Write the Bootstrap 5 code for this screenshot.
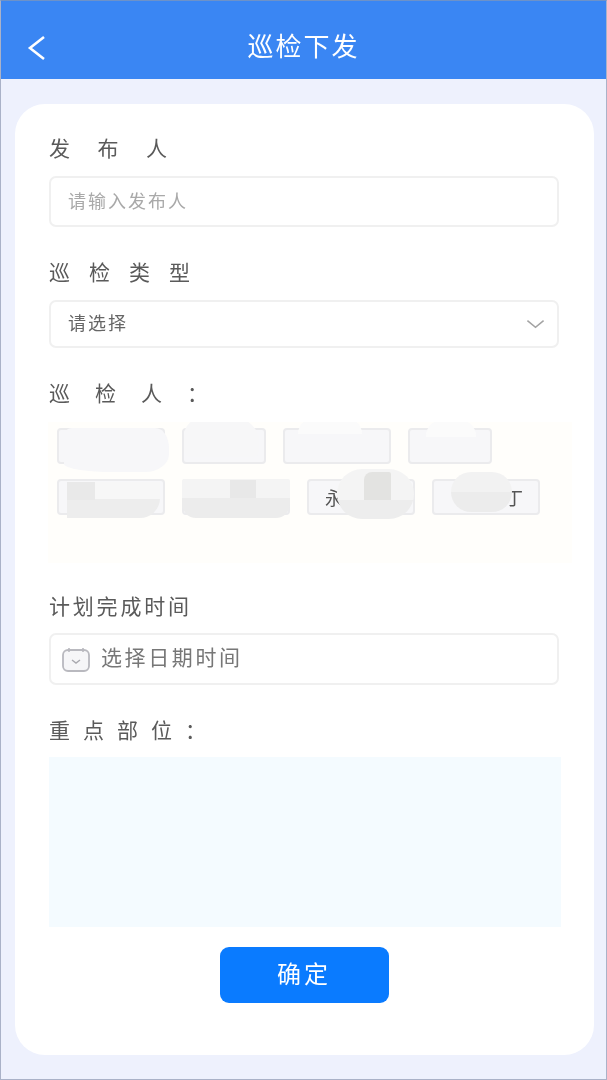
<!DOCTYPE html>
<html lang="zh-CN">
<head>
<meta charset="utf-8">
<title>巡检下发</title>
<link href="https://cdn.jsdelivr.net/npm/bootstrap@5.3.0/dist/css/bootstrap.min.css" rel="stylesheet">
<style>
html,body{height:100%;}
body{background:#eef1fd;font-family:"Noto Sans CJK SC","Liberation Sans",sans-serif;overflow:hidden;}
.shell{height:1080px;width:607px;border:1px solid #aab2c8;border-top-color:#6d92c8;filter:blur(.45px);}
.topbar{height:78px;background:#3a86f3;color:#fff;margin:0;}
.topbar svg{position:absolute;left:26px;top:34px;}
.topbar-title{font-size:26px;letter-spacing:2px;line-height:1;padding-top:9px;}
.sheet{margin:25px 12px 0 14px;height:951px;background:#fff;border-radius:30px;padding:30px 35px 52px 34px;}
.fld{font-size:21px;line-height:26px;padding-bottom:3px;color:#5a5a5a;margin:0;font-weight:400;display:block;}
.ls-a{letter-spacing:27.5px;}
.ls-b{letter-spacing:19px;}
.ls-c{letter-spacing:25px;}
.ls-d{letter-spacing:2.8px;}
.ls-e{letter-spacing:13px;}
.gap-a{margin-top:31px;}
.gap-b{margin-top:29px;}
.ctl.form-control,.ctl.form-select{height:51px;margin-top:13px;border:2px solid #f0f0f0;border-radius:7px;padding:0 17px 4px;font-size:18px;letter-spacing:2px;color:#666;box-shadow:none;}
.ctl.form-control::placeholder{color:#a9a9a9;opacity:1;}
.ctl.form-select{height:48px;background-image:url("data:image/svg+xml,%3Csvg xmlns='http://www.w3.org/2000/svg' viewBox='0 0 20 10'%3E%3Cpath d='M1.5 1.5 10 8.5l8.5-7' fill='none' stroke='%23a3a3a3' stroke-width='1.6'/%3E%3C/svg%3E");background-position:right 12px center;background-size:19px 10px;}
.people{margin:14px -13px 0 -1px;height:141px;background:#fffefb;position:relative;padding:6px 20px 0 9px;overflow:hidden;}
.tag-flow{gap:15px 17px;}
.tag{width:108px;height:36px;border:2px solid #ebebed;border-radius:4px;background:#f7f7f9;font-size:18px;line-height:32px;color:#555;padding:0 16px;}
.tag-s{width:84px;}
.tag-end{text-align:right;padding-right:15px;}
.smear{position:absolute;}
.sm1{left:16px;top:6px;width:105px;height:44px;background:#f7f7f9;border-radius:8px 14px 24px 50px / 8px 20px 18px 8px;}
.sm2{left:136px;top:-4px;width:75px;height:39px;background:#f7f7f8;border-radius:18px 24px 6px 6px;}
.sm3{left:250px;top:-4px;width:64px;height:16px;background:#fbfbfb;border-radius:16px 16px 0 0;}
.sm4{left:378px;top:-2px;width:50px;height:17px;background:#fbfbfb;border-radius:16px 16px 0 0;}
.sm5a{left:19px;top:60px;width:93px;height:36px;background:linear-gradient(#f7f7f7 0 48%,#ededed 48%);border-radius:0 0 20px 0;}
.sm5b{left:19px;top:60px;width:28px;height:18px;background:#e9e9e9;}
.sm6a{left:134px;top:57px;width:108px;height:39px;background:linear-gradient(#f4f4f4 0 50%,#ececec 50%);border-radius:2px 2px 14px 14px;}
.sm6b{left:182px;top:58px;width:26px;height:18px;background:#e8e8e8;}
.sm7a{left:289px;top:47px;width:77px;height:50px;background:linear-gradient(#f4f4f4 0 62%,#ededed 62%);border-radius:26px;}
.sm7b{left:316px;top:50px;width:27px;height:28px;background:#e3e3e1;border-radius:8px 2px 0 0;}
.sm8{left:403px;top:50px;width:61px;height:40px;background:linear-gradient(#f2f2f2 0 50%,#ececec 50%);border-radius:22px;}
.picker{height:52px;margin-top:12px;border:2px solid #f0f0f0;border-radius:7px;padding:0 0 4px 10px;font-size:21px;letter-spacing:2.6px;color:#777;gap:10px;}
.picker svg{margin-top:6px;}
.focus-box.form-control{height:170px;margin:12px -2px 0 0;width:calc(100% + 2px);background:#f4fbff;border:0;border-radius:0;resize:none;box-shadow:none;}
.submit-btn.btn{display:block;width:169px;height:56px;margin:20px auto 0;background:#0a7bff;border:0;border-radius:9px;color:#fff;font-size:24px;letter-spacing:3px;line-height:52px;padding:0 0 4px;}
</style>
</head>
<body>
<div class="shell">
  <header class="topbar position-relative d-flex align-items-center justify-content-center">
    <svg width="20" height="26" viewBox="0 0 20 26" aria-hidden="true"><path d="M17 2 3 13l14 11" fill="none" stroke="#fff" stroke-width="2.6"/></svg>
    <div class="topbar-title">巡检下发</div>
  </header>
  <main class="sheet">
    <form>
      <label class="fld ls-a">发布人</label>
      <input class="ctl form-control" type="text" placeholder="请输入发布人">

      <label class="fld ls-b gap-a">巡检类型</label>
      <select class="ctl form-select"><option>请选择</option></select>

      <label class="fld ls-c gap-a">巡检人：</label>
      <div class="people">
        <div class="d-flex flex-wrap tag-flow">
          <span class="tag"></span><span class="tag tag-s"></span><span class="tag"></span><span class="tag tag-s"></span>
          <span class="tag"></span><span class="tag"></span><span class="tag">永</span><span class="tag tag-end">丁</span>
        </div>
        <i class="smear sm1"></i><i class="smear sm2"></i><i class="smear sm3"></i><i class="smear sm4"></i>
        <i class="smear sm5a"></i><i class="smear sm5b"></i><i class="smear sm6a"></i><i class="smear sm6b"></i>
        <i class="smear sm7a"></i><i class="smear sm7b"></i><i class="smear sm8"></i>
      </div>

      <label class="fld ls-d gap-b">计划完成时间</label>
      <div class="picker d-flex align-items-center">
        <svg width="30" height="28" viewBox="0 0 30 28" aria-hidden="true"><rect x="2" y="4" width="26" height="21" rx="5" fill="#f6f6f8" stroke="#b9b9bf" stroke-width="1.8"/><path d="M8 2v4M22 2v4" stroke="#b9b9bf" stroke-width="1.6"/><path d="M11 14l4 3 4-3" fill="none" stroke="#a9a9af" stroke-width="1.4"/></svg>
        <span>选择日期时间</span>
      </div>

      <label class="fld ls-e gap-a">重点部位：</label>
      <textarea class="focus-box form-control"></textarea>

      <button type="button" class="submit-btn btn btn-primary">确定</button>
    </form>
  </main>
</div>
<script src="https://cdn.jsdelivr.net/npm/bootstrap@5.3.0/dist/js/bootstrap.bundle.min.js"></script>
</body>
</html>
